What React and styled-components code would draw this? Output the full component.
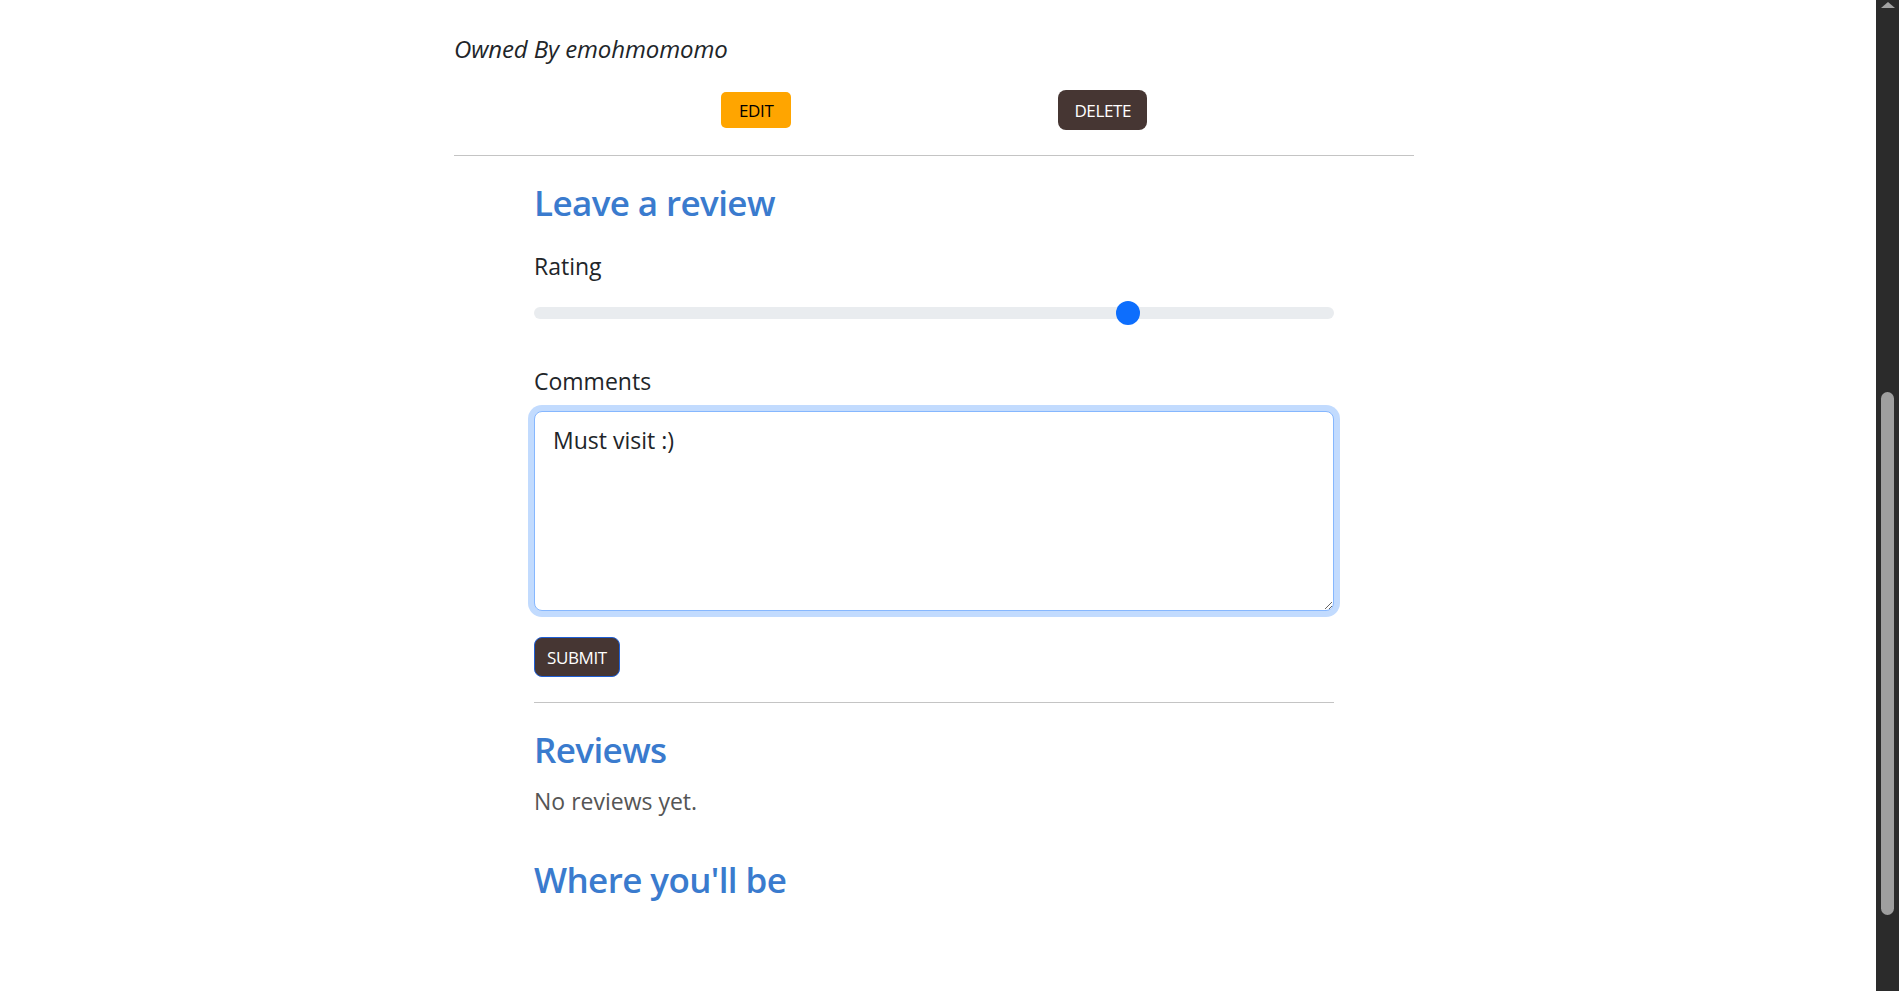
import React from 'react';
import styled, {createGlobalStyle} from 'styled-components';

const GlobalStyle = createGlobalStyle`
    html, body {
        margin: 0;
        padding: 0;
        overflow: hidden;
        background: #fff;
    }
    body {
        font-family: "Open Sans", "Noto Sans", sans-serif;
        color: #212529;
    }
`;

const Page = styled.div`
    min-height: 991px;
    padding-right: 23px;
`, Container = styled.main`
    width: 960px;
    margin-left: 454px;
    padding-top: 31px;
`, Owner = styled.p`
    margin: 0;
    font-size: 24px;
    line-height: 36px;
    font-style: italic;
    letter-spacing: -0.1px;
`, ButtonRow = styled.div`
    display: flex;
    justify-content: space-evenly;
    align-items: center;
    height: 40px;
    margin: 23px 0 25px;
`, Button = styled.button`
    font-family: inherit;
    font-size: 17px;
    line-height: 1;
    letter-spacing: -0.4px;
    border: ${props => props.$outlined ? '1px solid #1f5fd6' : 'none'};
    border-radius: ${props => props.$small ? '5px' : '8px'};
    background: ${props => props.$warning ? '#ffa500' : '#463633'};
    color: ${props => props.$warning ? '#000' : '#fff'};
    height: ${props => props.$small ? '36px' : '40px'};
    padding: 0 ${props => props.$pad || 16}px;
    cursor: pointer;
`, Rule = styled.hr`
    margin: 0;
    border: none;
    border-top: 1px solid #c4c4c4;
`, Column = styled.section`
    width: 800px;
    margin: 0 auto;
`, Heading = styled.h2`
    margin: ${props => props.$top || 24}px 0 0;
    font-size: 35px;
    line-height: 45px;
    font-weight: 600;
    letter-spacing: -0.6px;
    color: #3a7bce;
`, Label = styled.label`
    display: block;
    font-size: 23px;
    line-height: 36px;
    margin-top: ${props => props.$top || 0}px;
`, Range = styled.input`
    display: block;
    width: 100%;
    height: 24px;
    margin: 17px 0 0;
    background: transparent;
    -webkit-appearance: none;
    appearance: none;

    &::-webkit-slider-runnable-track {
        height: 12px;
        border-radius: 6px;
        background: #e9ecef;
    }
    &::-webkit-slider-thumb {
        -webkit-appearance: none;
        width: 24px;
        height: 24px;
        margin-top: -6px;
        border-radius: 50%;
        border: none;
        background: #0d6efd;
    }
`, TextArea = styled.textarea`
    display: block;
    box-sizing: border-box;
    width: 100%;
    height: 200px;
    margin-top: 12px;
    padding: 10px 18px;
    font-family: inherit;
    font-size: 23px;
    line-height: 36px;
    color: #212529;
    border: 1px solid #86b7fe;
    border-radius: 8px;
    box-shadow: 0 0 0 6px #c2dbfe;
    outline: none;
`, SubmitWrap = styled.div`
    margin: 26px 0 25px;
`, Muted = styled.p`
    margin: 11px 0 0;
    font-size: 23px;
    line-height: 36px;
    color: #555;
`, ScrollBar = styled.div`
    position: fixed;
    top: 0;
    right: 0;
    width: 23px;
    height: 100%;
    background: #2b2b2b;
`, ScrollArrow = styled.div`
    position: absolute;
    top: 2px;
    left: 5px;
    width: 0;
    height: 0;
    border-left: 7px solid transparent;
    border-right: 7px solid transparent;
    border-bottom: 6px solid #a3a3a3;
`, ScrollThumb = styled.div`
    position: absolute;
    top: 392px;
    left: 5px;
    width: 13px;
    height: 523px;
    border-radius: 7px;
    background: #9f9f9f;
`;

export default function App() {
    return (
        <Page>
            <GlobalStyle/>
            <Container>
                <Owner>Owned By emohmomomo</Owner>
                <ButtonRow>
                    <Button $warning $small $pad={18}>EDIT</Button>
                    <Button $pad={16}>DELETE</Button>
                </ButtonRow>
                <Rule/>
                <Column>
                    <Heading>Leave a review</Heading>
                    <Label htmlFor="rating" $top={23}>Rating</Label>
                    <Range id="rating" type="range" min="1" max="5" defaultValue="4"/>
                    <Label htmlFor="comments" $top={38}>Comments</Label>
                    <TextArea id="comments" defaultValue="Must visit :)"/>
                    <SubmitWrap>
                        <Button $outlined $pad={12}>SUBMIT</Button>
                    </SubmitWrap>
                    <Rule/>
                    <Heading>Reviews</Heading>
                    <Muted>No reviews yet.</Muted>
                    <Heading $top={38}>Where you'll be</Heading>
                </Column>
            </Container>
            <ScrollBar>
                <ScrollArrow/>
                <ScrollThumb/>
            </ScrollBar>
        </Page>
    );
}
